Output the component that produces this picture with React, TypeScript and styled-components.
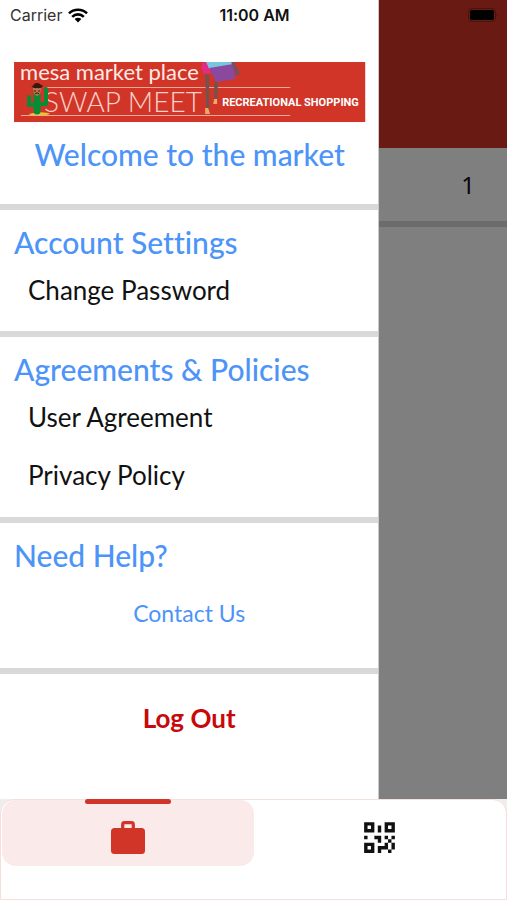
import React from "react";
import styled, { createGlobalStyle } from "styled-components";

const GlobalStyle = createGlobalStyle`
  *, *::before, *::after { box-sizing: border-box; }
  body { margin: 0; font-family: Lato, "Noto Sans", sans-serif; font-variant-ligatures: none; color: #111; background: #eee; }
  h1, h2, ul { margin: 0; padding: 0; }
  button { border: 0; padding: 0; background: none; font: inherit; color: inherit; cursor: pointer; }
  svg { display: block; }
`;

const colors = {
  brand: "#d13527",
  link: "#4d94f8",
  danger: "#c8090b",
  rule: "#d9d9d9",
};

const Screen = styled.div`
  min-height: 100vh;
  display: flex;
  flex-direction: column;
`;

const Stage = styled.div`
  flex: 1;
  display: grid;
  > * { grid-area: 1 / 1; }
`;

const Page = styled.main`
  background: #fff;
`;

const PageHeader = styled.header`
  height: 148px;
  background: ${colors.brand};
`;

const CountRow = styled.div`
  display: flex;
  align-items: center;
  justify-content: flex-end;
  height: 79px;
  padding: 0 32px;
  border-bottom: 6px solid ${colors.rule};
  font-family: "Noto Sans", sans-serif;
  font-size: 24px;
`;

const Scrim = styled.div`
  background: rgba(0, 0, 0, 0.5);
`;

const StatusBar = styled.div`
  display: grid;
  grid-template-columns: 1fr auto 1fr;
  align-items: center;
  align-self: start;
  height: 30px;
  padding: 0 8px 0 10px;
  font-family: Inter, sans-serif;
  font-size: 16px;
  z-index: 1;
`;

const Carrier = styled.span`
  display: flex;
  align-items: center;
  gap: 6px;
  color: #333;
`;

const Clock = styled.time`
  font-weight: 600;
`;

const BatterySlot = styled.span`
  justify-self: end;
`;

const Drawer = styled.nav`
  width: calc(75% - 1px);
  background: #fff;
  border-right: 1px solid #c9c9c9;
`;

const Section = styled.section<{ $height: number }>`
  min-height: ${(p) => p.$height}px;
  border-bottom: 6px solid ${colors.rule};
`;

const Intro = styled.div`
  min-height: 210px;
  padding: 62px 13px 0 14px;
  border-bottom: 6px solid ${colors.rule};
`;

const BannerArt = styled.svg`
  width: 100%;
  overflow: visible;
`;

const Welcome = styled.h1`
  margin-top: 14px;
  font-size: 30px;
  line-height: 36px;
  font-weight: 500;
  text-align: center;
  white-space: nowrap;
  color: ${colors.link};
`;

const SectionTitle = styled.h2`
  padding: 14px 14px 0;
  font-size: 30px;
  line-height: 36px;
  font-weight: 500;
  color: ${colors.link};
`;

const Items = styled.ul`
  list-style: none;
  display: grid;
  gap: 22px;
  padding: 12px 28px 0;
`;

const ItemButton = styled.button`
  display: block;
  font-size: 26px;
  line-height: 36px;
`;

const ContactLink = styled.a`
  display: block;
  margin-top: 22px;
  text-align: center;
  font-size: 23px;
  line-height: 36px;
  text-decoration: none;
  color: ${colors.link};
`;

const LogOut = styled.button`
  display: block;
  width: 100%;
  margin-top: 26px;
  font-size: 26px;
  line-height: 36px;
  font-weight: 700;
  color: ${colors.danger};
`;

const TabBar = styled.nav`
  height: 101px;
  display: grid;
  grid-template-columns: 1fr 1fr;
  align-items: start;
  padding: 0 1px;
  background: #fff;
  border: 1px solid #fbdcdc;
  border-radius: 14px 14px 0 0;
`;

const Tab = styled.button<{ $active?: boolean }>`
  position: relative;
  display: flex;
  align-items: center;
  justify-content: center;
  height: 66px;
  padding-top: 8px;
  border-radius: 14px;
  background: ${(p) => (p.$active ? "#fbeaea" : "transparent")};
`;

const Indicator = styled.span`
  position: absolute;
  top: -1px;
  left: 33%;
  right: 33%;
  height: 5px;
  border-radius: 3px;
  background: ${colors.brand};
`;

const Wifi = () => (
  <svg width="20" height="15" viewBox="0 0 20 15" aria-hidden="true">
    <g fill="none" stroke="#000" strokeWidth="2.6">
      <path d="M1 5.4 A12.8 12.8 0 0 1 19 5.4" />
      <path d="M4.2 8.8 A8.2 8.2 0 0 1 15.8 8.8" />
    </g>
    <path d="M6.6 11.1 A4.9 4.9 0 0 1 13.4 11.1 L10 14.6 Z" fill="#000" />
  </svg>
);

const Battery = () => (
  <svg width="31" height="14" viewBox="0 0 31 14" aria-hidden="true">
    <rect x="0.5" y="0.5" width="27" height="13" rx="3.5" fill="none" stroke="#4b130e" />
    <rect x="2" y="2" width="24" height="10" rx="2" fill="#000" />
    <path d="M29 5 Q31 7 29 9 Z" fill="#4b130e" />
  </svg>
);

const Banner = () => (
  <BannerArt viewBox="0 0 351 60" role="img" aria-label="Mesa Market Place Swap Meet">
    <rect width="351" height="60" fill={colors.brand} />
    <path d="M32 25.5 H276 M7 53.5 H276" stroke="#f0a79b" />
    <text x="6" y="18" fontFamily="Lato" fontSize="22" fill="#ffe9e4">mesa market place</text>
    <text x="30" y="50" fontFamily="Lato" fontWeight="300" fontSize="28" fill="#fbd0c8">SWAP MEET</text>
    <text x="208" y="44" fontFamily="Roboto" fontWeight="700" fontSize="11" fill="#fff">RECREATIONAL SHOPPING</text>
    <path d="M15 52 Q24 49 34 51 Q38 52 32 53 H16 Z" fill="#e8c529" />
    <g fill="none" stroke="#078c35" strokeLinecap="round" strokeLinejoin="round">
      <path d="M23 49 V32" strokeWidth="7" />
      <path d="M21 43 H15 V35 M25 42 H32 V27" strokeWidth="4" />
    </g>
    <path d="M19 26 H27 L26 32 L23 34 L20 32 Z" fill="#b9794f" />
    <path d="M17 24 Q20 27 23 26 Q28 27 29 23 Q27 24 26 22 Q23 20 20 22 Q19 25 17 24" fill="#3a1712" />
    <path d="M20 29 H22 M24 29 H26 M21 32 Q23 30 25 32" stroke="#3a1712" fill="none" />
    <path d="M188 1 L194 0 L197 11 L190 12 L187 6 Z" fill="#e22b85" />
    <path d="M192 0 H219 L220 6 L195 7 Z" fill="#79c5dc" />
    <path d="M195 6 L219 2 L221 17 L202 20 Z" fill="#8b489f" />
    <path d="M217 0 H220 L226 12 L222 14 Z" fill="#77505e" />
    <path d="M191 12 L195 13 L195 47 H192 Z M200 20 L204 20 L203 38 H200 Z" fill="#75534c" />
    <path d="M191 46 H194 L196 52 H191 Z M200 37 H203 L203 42 H199 Z" fill="#efa765" />
  </BannerArt>
);

const Briefcase = () => (
  <svg width="34" height="33" viewBox="0 0 34 33" aria-hidden="true" fill={colors.brand}>
    <rect y="7" width="34" height="26" rx="3.5" />
    <path d="M11.7 8 V3.5 Q11.7 1.7 13.5 1.7 H20.5 Q22.3 1.7 22.3 3.5 V8" fill="none" stroke={colors.brand} strokeWidth="3.2" />
  </svg>
);

const QrCode = () => (
  <svg width="41" height="41" viewBox="0 0 24 24" aria-hidden="true" fill="#111">
    <path d="M3,11H5V13H3V11M11,5H13V9H11V5M9,11H13V15H11V13H9V11M15,11H17V13H19V11H21V13H19V15H21V19H19V21H17V19H13V21H11V17H15V15H17V13H15V11M19,19V15H17V19H19M15,3H21V9H15V3M17,5V7H19V5H17M3,3H9V9H3V3M5,5V7H7V5H5M3,15H9V21H3V15M5,17V19H7V17H5Z" />
  </svg>
);

export default function App() {
  return (
    <>
      <GlobalStyle />
      <Screen>
        <Stage>
          <Page>
            <PageHeader />
            <CountRow>1</CountRow>
          </Page>
          <Scrim />
          <Drawer aria-label="Menu">
            <Intro>
              <Banner />
              <Welcome>Welcome to the market</Welcome>
            </Intro>
            <Section $height={127}>
              <SectionTitle>Account Settings</SectionTitle>
              <Items>
                <li><ItemButton>Change Password</ItemButton></li>
              </Items>
            </Section>
            <Section $height={186}>
              <SectionTitle>Agreements &amp; Policies</SectionTitle>
              <Items>
                <li><ItemButton>User Agreement</ItemButton></li>
                <li><ItemButton>Privacy Policy</ItemButton></li>
              </Items>
            </Section>
            <Section $height={151}>
              <SectionTitle>Need Help?</SectionTitle>
              <ContactLink href="#contact">Contact Us</ContactLink>
            </Section>
            <LogOut>Log Out</LogOut>
          </Drawer>
          <StatusBar>
            <Carrier>Carrier <Wifi /></Carrier>
            <Clock>11:00 AM</Clock>
            <BatterySlot><Battery /></BatterySlot>
          </StatusBar>
        </Stage>
        <TabBar aria-label="Tabs">
          <Tab $active aria-label="Shop">
            <Indicator />
            <Briefcase />
          </Tab>
          <Tab aria-label="QR code">
            <QrCode />
          </Tab>
        </TabBar>
      </Screen>
    </>
  );
}
